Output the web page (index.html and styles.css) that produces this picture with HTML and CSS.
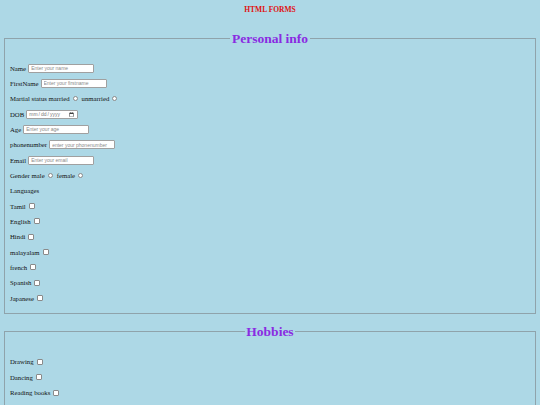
FILE: index.html
```html
<!DOCTYPE html>
<html lang="en">
<head>
<meta charset="utf-8">
<title>HTML FORMS</title>
<link rel="stylesheet" href="styles.css">
</head>
<body>
<h1 class="title">HTML FORMS</h1>
<form class="form">
  <fieldset class="group">
    <legend class="group-title">Personal info</legend>
    <div class="row"><label>Name</label><input class="text" type="text" placeholder="Enter your name"></div>
    <div class="row"><label>FirstName</label><input class="text" type="text" placeholder="Enter your firstname"></div>
    <div class="row"><label>Martial status married</label><input class="radio" type="radio" name="ms"><label class="after">unmarried</label><input class="radio" type="radio" name="ms"></div>
    <div class="row"><label>DOB</label><input class="date" type="date"></div>
    <div class="row"><label>Age</label><input class="text" type="text" placeholder="Enter your age"></div>
    <div class="row"><label>phonenumber</label><input class="text" type="text" placeholder="enter your phonenumber"></div>
    <div class="row"><label>Email</label><input class="text" type="text" placeholder="Enter your email"></div>
    <div class="row"><label>Gender male</label><input class="radio" type="radio" name="g"><label class="after">female</label><input class="radio" type="radio" name="g"></div>
    <div class="row"><label>Languages</label></div>
    <div class="row"><label>Tamil</label><input class="check" type="checkbox"></div>
    <div class="row"><label>English</label><input class="check" type="checkbox"></div>
    <div class="row"><label>Hindi</label><input class="check" type="checkbox"></div>
    <div class="row"><label>malayalam</label><input class="check" type="checkbox"></div>
    <div class="row"><label>french</label><input class="check" type="checkbox"></div>
    <div class="row"><label>Spanish</label><input class="check" type="checkbox"></div>
    <div class="row"><label>Japanese</label><input class="check" type="checkbox"></div>
  </fieldset>
  <fieldset class="group group-hobbies">
    <legend class="group-title">Hobbies</legend>
    <div class="row"><label>Drawing</label><input class="check" type="checkbox"></div>
    <div class="row"><label>Dancing</label><input class="check" type="checkbox"></div>
    <div class="row"><label>Reading books</label><input class="check" type="checkbox"></div>
    <div class="row"><label>Hearing music</label><input class="check" type="checkbox"></div>
  </fieldset>
</form>
</body>
</html>
```
FILE: styles.css
```css
html, body {
  margin: 0;
  padding: 0;
}
body {
  background: #add8e6;
  font-family: "Liberation Serif", "Times New Roman", serif;
  font-size: 6.75px;
  color: #111;
}
.title {
  margin: 0;
  height: 20px;
  line-height: 20px;
  text-align: center;
  font-size: 7.5px;
  font-weight: bold;
  color: #e01010;
}
.form {
  display: flex;
  flex-direction: column;
  gap: 10px;
  padding-top: 11px;
}
.group {
  margin: 0 4px;
  border: 1px solid #8fa3ab;
  padding: 14px 5px 7px;
  min-width: 0;
}
.group-hobbies {
  padding-top: 15px;
}
.group-title {
  margin: 0 auto;
  padding: 0 1.5px;
  font-size: 13.5px;
  line-height: 15.5px;
  font-weight: bold;
  color: #8a2be2;
}
.row {
  display: flex;
  align-items: center;
  height: 15.33px;
  white-space: pre;
}
.after {
  margin-left: 4px;
}
.text {
  box-sizing: border-box;
  width: 66px;
  height: 9px;
  margin: 0 0 0 2px;
  padding: 0 2px;
  border: 1px solid #a0a0a0;
  border-radius: 1px;
  background: #fff;
  font: 5px "Liberation Sans", Arial, sans-serif;
  color: #222;
}
.text::placeholder {
  color: #8a8a8a;
}
.date {
  box-sizing: border-box;
  width: 52px;
  height: 9px;
  margin: 0 0 0 2px;
  padding: 0 1px;
  border: 1px solid #a0a0a0;
  border-radius: 1px;
  background: #fff;
  font: 5px "Liberation Sans", Arial, sans-serif;
  color: #777;
}
.check {
  appearance: none;
  box-sizing: border-box;
  width: 6px;
  height: 6px;
  margin: 0 0 0 3px;
  border: 0.5px solid #8a8a8a;
  border-radius: 1px;
  background: #fff;
}
.radio {
  appearance: none;
  box-sizing: border-box;
  width: 5px;
  height: 5px;
  margin: 0 0 0 3px;
  border: 0.5px solid #8a8a8a;
  border-radius: 50%;
  background: #fff;
}
```
